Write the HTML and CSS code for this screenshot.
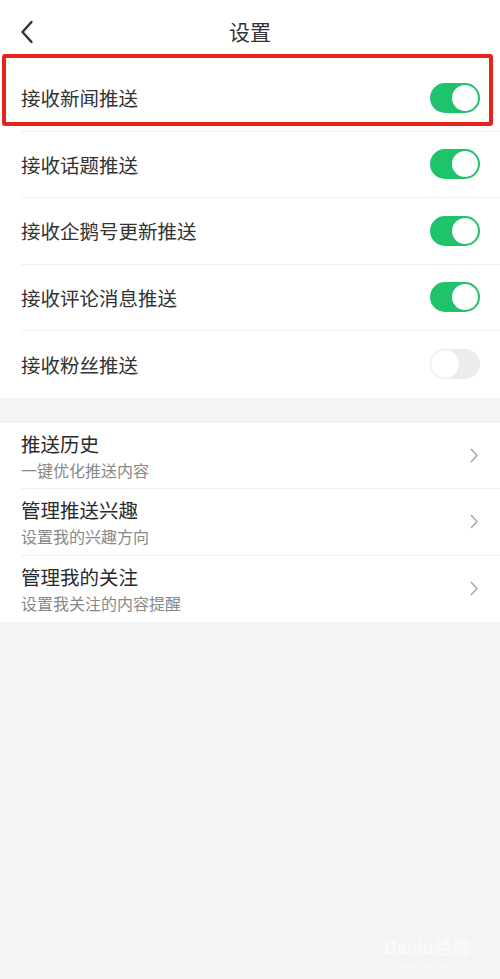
FILE: index.html
```html
<!DOCTYPE html>
<html lang="zh-CN">
  <head>
    <meta charset="UTF-8" />
    <meta name="viewport" content="width=device-width, initial-scale=1.0" />
    <title>设置</title>
    <link rel="stylesheet" href="styles.css">
  </head>
  <body>
    <header class="top-bar">
      <svg class="back" width="14" height="24" viewBox="0 0 14 24">
        <path d="M11.5 2 L2.5 12 L11.5 22" fill="none" stroke="#333" stroke-width="2.4" stroke-linecap="round" stroke-linejoin="round" />
      </svg>
      <h1>设置</h1>
    </header>

    <!-- 推送开关 -->
    <section class="group">
      <div class="row">
        <span class="label">接收新闻推送</span>
        <span class="switch on"></span>
      </div>
      <div class="row">
        <span class="label">接收话题推送</span>
        <span class="switch on"></span>
      </div>
      <div class="row">
        <span class="label">接收企鹅号更新推送</span>
        <span class="switch on"></span>
      </div>
      <div class="row">
        <span class="label">接收评论消息推送</span>
        <span class="switch on"></span>
      </div>
      <div class="row">
        <span class="label">接收粉丝推送</span>
        <span class="switch"></span>
      </div>
    </section>

    <!-- 推送管理 -->
    <section class="group">
      <div class="row">
        <div class="texts">
          <span class="title">推送历史</span>
          <span class="sub">一键优化推送内容</span>
        </div>
        <svg class="arrow" width="8" height="15" viewBox="0 0 8 15">
          <path d="M1 1 L7 7.5 L1 14" fill="none" stroke="#a0a0a0" stroke-width="1.3" />
        </svg>
      </div>
      <div class="row">
        <div class="texts">
          <span class="title">管理推送兴趣</span>
          <span class="sub">设置我的兴趣方向</span>
        </div>
        <svg class="arrow" width="8" height="15" viewBox="0 0 8 15">
          <path d="M1 1 L7 7.5 L1 14" fill="none" stroke="#a0a0a0" stroke-width="1.3" />
        </svg>
      </div>
      <div class="row">
        <div class="texts">
          <span class="title">管理我的关注</span>
          <span class="sub">设置我关注的内容提醒</span>
        </div>
        <svg class="arrow" width="8" height="15" viewBox="0 0 8 15">
          <path d="M1 1 L7 7.5 L1 14" fill="none" stroke="#a0a0a0" stroke-width="1.3" />
        </svg>
      </div>
    </section>

    <!-- 标注框 -->
    <div class="mark"></div>

    <div class="watermark">
      <span class="wm-logo">Bai<b>du</b>经验</span>
      <span class="wm-url">jingyan.baidu.com</span>
    </div>
  </body>
</html>
```

FILE: styles.css
```css
:root {
  --green: #1fc36b;
  --text-color: #333;
  --sub-color: #888;
  --bg-color: #f4f4f4;
  --line-color: #f0f0f0;
  --font-family: "Noto Sans CJK SC", "Noto Sans", sans-serif;
}
* {
  margin: 0;
  padding: 0;
  box-sizing: border-box;
}
body {
  position: relative;
  min-height: 979px;
  background-color: var(--bg-color);
  font-family: var(--font-family);
  color: var(--text-color);
}
.top-bar {
  height: 65px;
  display: flex;
  align-items: center;
  justify-content: center;
  position: relative;
  background-color: #fff;
}
.top-bar h1 {
  font-size: 21px;
  font-weight: 400;
  line-height: 1;
  margin-top: -2px;
}
.back {
  position: absolute;
  left: 20px;
  top: 20px;
}
.group {
  background-color: #fff;
  margin-bottom: 25px;
}
.row {
  height: 66.5px;
  margin-left: 21px;
  padding-right: 20px;
  display: flex;
  align-items: center;
  justify-content: space-between;
  border-bottom: 1px solid var(--line-color);
}
.row:last-child {
  border-bottom: none;
}
.label {
  font-size: 19.5px;
  line-height: 1;
}
.switch {
  width: 50px;
  height: 30px;
  border-radius: 15px;
  background-color: #ececec;
  position: relative;
}
.switch::after {
  content: "";
  position: absolute;
  top: 1px;
  left: 1px;
  width: 28px;
  height: 28px;
  border-radius: 50%;
  background-color: #fff;
  box-shadow: 0 0 1px rgba(0, 0, 0, 0.08);
}
.switch.on {
  background-color: var(--green);
}
.switch.on::after {
  left: auto;
  width: 26px;
  height: 26px;
  top: 2px;
  right: 2px;
}
.texts {
  display: flex;
  flex-direction: column;
  gap: 6px;
  margin-top: 1px;
}
.title {
  font-size: 19.5px;
  line-height: 22px;
  color: #2a2a2a;
}
.sub {
  font-size: 16px;
  line-height: 18px;
  color: var(--sub-color);
}
.arrow {
  margin-right: 2px;
}
.mark {
  position: absolute;
  left: 2px;
  top: 54px;
  width: 491px;
  height: 72px;
  border: 4px solid #e8221c;
  border-radius: 3px;
}
.watermark {
  position: absolute;
  right: 30px;
  bottom: 8px;
  display: flex;
  flex-direction: column;
  align-items: center;
  color: #fff;
  opacity: 0.6;
  font-family: "Liberation Sans", sans-serif;
}
.wm-logo {
  font-size: 18px;
  font-weight: 700;
}
.wm-url {
  font-size: 9px;
  line-height: 12px;
}
```
